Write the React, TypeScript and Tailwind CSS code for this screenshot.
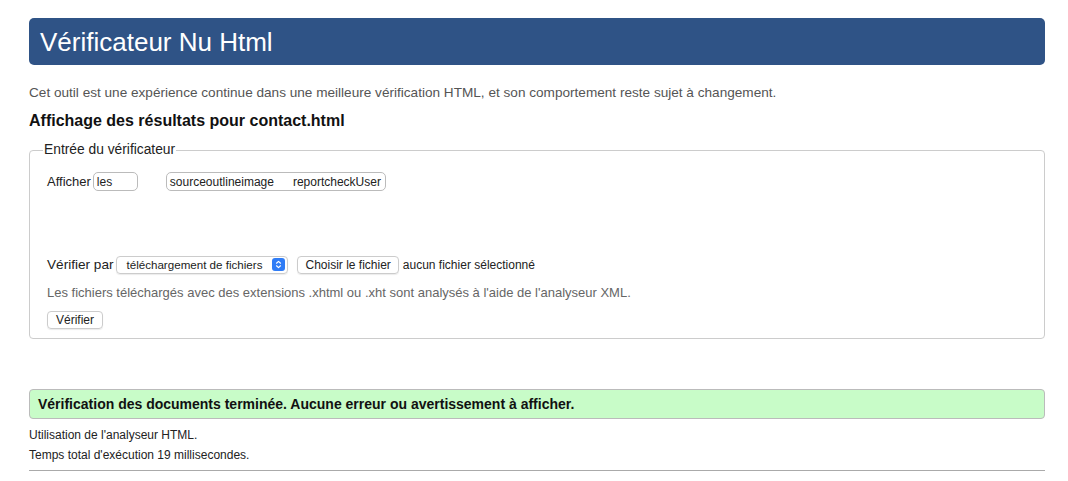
import React from 'react';

const App: React.FC = () => {
  return (
    <div className="min-h-[481px] bg-white font-['Liberation_Sans',Arial,sans-serif] text-[#222]">
      <div className="ml-[29px] w-[1016px] pt-[18px]">
        <header className="flex h-[47px] items-center rounded-[5px] bg-[#2f5386] px-[11px]">
          <h1 className="text-[26px] leading-none text-white">Vérificateur Nu Html</h1>
        </header>

        <p className="mt-[20px] text-[13.6px] leading-[16px] text-[#555]">
          Cet outil est une expérience continue dans une meilleure vérification HTML, et son comportement reste sujet à changement.
        </p>
        <h2 className="mt-[10px] text-[16px] font-bold leading-[20px] text-[#111]">
          Affichage des résultats pour contact.html
        </h2>

        <fieldset className="mt-[12px] h-[196px] rounded-[4px] border border-[#ccc] px-[17px]">
          <legend className="ml-[-4px] px-px text-[13.8px] leading-[14px] text-[#222]">Entrée du vérificateur</legend>

          <div className="mt-[15px] flex items-center text-[13px]">
            <span>Afficher</span>
            <span className="ml-[2px] flex h-[19px] w-[45px] items-center rounded-[5px] border border-[#bbb] px-[3px] text-[12px]">
              les
            </span>
            <span className="ml-[28px] flex h-[19px] w-[220px] items-center rounded-[5px] border border-[#bbb] px-[3px] text-[12px]">
              sourceoutlineimage<span className="ml-[19px]">reportcheckUser</span>
            </span>
          </div>

          <div className="mt-[63px] flex items-center text-[13.6px]">
            <span>Vérifier par</span>
            <span className="ml-[3px] flex h-[18px] w-[172px] items-center justify-between rounded-[4px] border border-[#ccc] pl-[9px] pr-[2px] text-[11.6px] shadow-[0_1px_1px_rgba(0,0,0,0.08)]">
              téléchargement de fichiers
              <span className="flex h-[13px] w-[13px] items-center justify-center rounded-[3px] bg-[#2f7cf6]">
                <svg width="7" height="9" viewBox="0 0 7 9" fill="none" stroke="white" strokeWidth="1.2" strokeLinecap="round" strokeLinejoin="round">
                  <path d="M1.5 3.2 3.5 1.4 5.5 3.2" />
                  <path d="M1.5 5.8 3.5 7.6 5.5 5.8" />
                </svg>
              </span>
            </span>
            <span className="ml-[9px] flex h-[18px] items-center rounded-[4px] border border-[#ccc] px-[7px] text-[12px] shadow-[0_1px_1px_rgba(0,0,0,0.08)]">
              Choisir le fichier
            </span>
            <span className="ml-[4px] text-[12px]">aucun fichier sélectionné</span>
          </div>

          <p className="mt-[10px] text-[13px] leading-[16px] text-[#666]">
            Les fichiers téléchargés avec des extensions .xhtml ou .xht sont analysés à l'aide de l'analyseur XML.
          </p>

          <div className="mt-[6px]">
            <span className="inline-flex h-[18px] items-center rounded-[4px] border border-[#ccc] px-[8px] text-[12px] shadow-[0_1px_1px_rgba(0,0,0,0.08)]">
              Vérifier
            </span>
          </div>
        </fieldset>

        <div className="mt-[50px] flex h-[30px] items-center rounded-[4px] border border-[#bbb] bg-[#c8fcc8] px-[8px]">
          <p className="text-[14px] font-bold text-[#111]">
            Vérification des documents terminée. Aucune erreur ou avertissement à afficher.
          </p>
        </div>

        <p className="mt-[8px] text-[12px] leading-[16px] text-[#222]">Utilisation de l'analyseur HTML.</p>
        <p className="mt-[4px] text-[12px] leading-[16px] text-[#222]">Temps total d'exécution 19 millisecondes.</p>
        <hr className="mt-[7px] border-t border-[#aaa]" />
      </div>
    </div>
  );
};

export default App;
